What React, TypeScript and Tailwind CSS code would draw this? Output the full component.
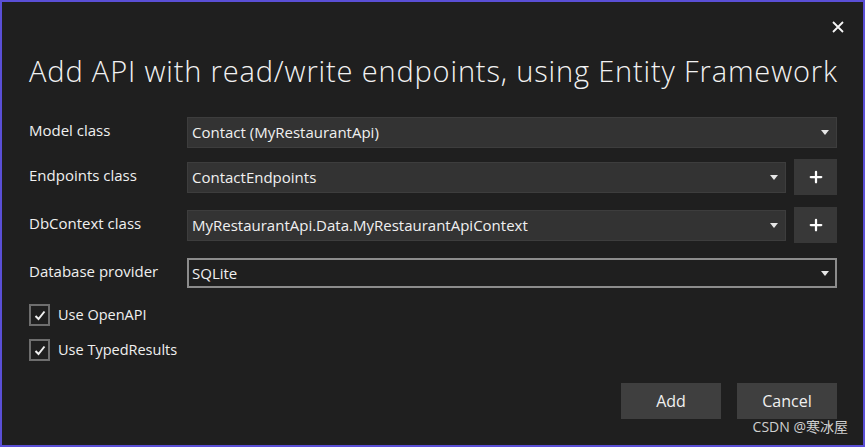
import { Plus } from 'lucide-react';

const font = { fontFamily: '"Open Sans", "Noto Sans", "Noto Sans CJK SC", sans-serif' };

const Caret = () => (
  <svg width="8" height="5" viewBox="0 0 8 5" className="shrink-0" aria-hidden>
    <path d="M0 0 H8 L4 5 Z" fill="#e6e6e6" />
  </svg>
);

const Field = ({ value, outlined }: { value: string; outlined?: boolean }) => (
  <div
    className={
      outlined
        ? 'flex h-[30px] flex-1 items-center justify-between border-2 border-[#8c8c8c] bg-[#1f1f1f] pl-[3px] pr-[6px]'
        : 'flex h-[31px] flex-1 items-center justify-between border border-[#3d3d3d] bg-[#333333] pl-[4px] pr-[7px]'
    }
  >
    <span className="text-[15px] text-[#f0f0f0]">{value}</span>
    <Caret />
  </div>
);

const Row = ({ label, children, className }: { label: string; children: React.ReactNode; className: string }) => (
  <div className={`flex h-[36px] items-center ${className}`}>
    <div className="w-[158px] shrink-0 pb-[4px] text-[15px] text-[#f0f0f0]">{label}</div>
    <div className="flex flex-1 items-center gap-[8px]">{children}</div>
  </div>
);

const AddButton = () => (
  <button className="flex h-[36px] w-[43px] shrink-0 items-center justify-center bg-[#383838]">
    <Plus className="h-[18px] w-[18px] text-white" strokeWidth={3} />
  </button>
);

const Check = ({ label, className }: { label: string; className: string }) => (
  <div className={`flex items-center gap-[8px] ${className}`}>
    <div className="flex h-[22px] w-[21px] items-center justify-center border-2 border-[#6e6e6e]">
      <svg width="12" height="11" viewBox="0 0 12 11" aria-hidden>
        <path d="M1.5 6 L4.5 9 L10.5 1.5" fill="none" stroke="#f0f0f0" strokeWidth="2" />
      </svg>
    </div>
    <span className="text-[14.5px] text-[#f0f0f0]">{label}</span>
  </div>
);

export default function App() {
  return (
    <div
      className="relative flex h-[447px] w-[865px] flex-col border-2 border-[#5a4fd6] bg-[#1f1f1f] pl-[27px] pr-[26px]"
      style={font}
    >
      <div className="flex justify-end pt-[19px]">
        <svg width="12" height="12" viewBox="0 0 12 12" className="mr-[-7px]" aria-hidden>
          <path d="M1 1 L11 11 M11 1 L1 11" stroke="#f5f5f5" strokeWidth="1.8" />
        </svg>
      </div>
      <h1 className="mt-[18px] whitespace-nowrap text-[29px] font-light leading-[40px] tracking-[0.85px] text-[#f2f2f2]">
        Add API with read/write endpoints, using Entity Framework
      </h1>

      <Row label="Model class" className="mt-[23px]">
        <Field value="Contact (MyRestaurantApi)" />
      </Row>
      <Row label="Endpoints class" className="mt-[9px]">
        <Field value="ContactEndpoints" />
        <AddButton />
      </Row>
      <Row label="DbContext class" className="mt-[12px]">
        <Field value="MyRestaurantApi.Data.MyRestaurantApiContext" />
        <AddButton />
      </Row>
      <Row label="Database provider" className="mt-[12px]">
        <Field value="SQLite" outlined />
      </Row>

      <Check label="Use OpenAPI" className="mt-[13px]" />
      <Check label="Use TypedResults" className="mt-[13px]" />

      <div className="mt-auto mb-[26px] flex justify-end gap-[16px]">
        <button className="h-[36px] w-[100px] bg-[#3f3f3f] text-[16px] text-[#f0f0f0]">Add</button>
        <button className="h-[36px] w-[100px] bg-[#3f3f3f] text-[16px] text-[#f0f0f0]">Cancel</button>
      </div>

      <div className="absolute bottom-[8px] right-[15px] text-[14px] text-[#cfcfcf]">CSDN @寒冰屋</div>
    </div>
  );
}
